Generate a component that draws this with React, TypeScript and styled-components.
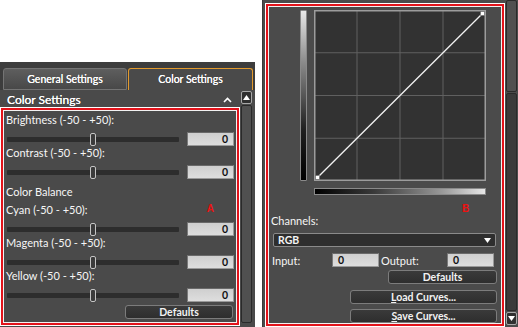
import React from 'react';
import styled, { createGlobalStyle } from 'styled-components';

const Global = createGlobalStyle`
  html, body { margin: 0; padding: 0; background: #ffffff; }
  body {
    width: 518px; height: 327px; overflow: hidden;
    font-family: Lato, "Noto Sans", "Liberation Sans", sans-serif;
    color: #f4f4f4;
  }
`;

const Page = styled.div`
  display: flex;
  align-items: flex-start;
  gap: 7px;
  width: 518px;
  height: 327px;
`;

/* ---------- shared ---------- */

const RedBox = styled.div<{ $w: number; $h: number }>`
  box-sizing: border-box;
  width: ${p => p.$w}px;
  height: ${p => p.$h}px;
  border: 2px solid #e3131b;
  outline: 1px solid #ffffff;
  box-shadow: inset 0 0 0 1px #f2f2f2;
  display: flex;
  flex-direction: column;
`;

const Label = styled.div<{ $mt?: number }>`
  height: 14px;
  line-height: 14px;
  font-size: 11px;
  color: #f6f6f6;
  margin-top: ${p => p.$mt ?? 0}px;
  white-space: nowrap;
`;

const ValueBox = styled.div<{ $align?: 'left' | 'right'; $w?: number }>`
  box-sizing: border-box;
  width: ${p => p.$w ?? 47}px;
  height: 14px;
  line-height: 12px;
  padding: 0 5px;
  font-size: 10.5px;
  font-weight: 700;
  color: #111;
  text-align: ${p => p.$align ?? 'right'};
  background: linear-gradient(#cfcfcf, #dedede);
  border: 1px solid #9a9a9a;
  border-top-color: #6a6a6a;
  border-left-color: #7a7a7a;
`;

const Button = styled.div<{ $w: number; $mt: number }>`
  box-sizing: border-box;
  width: ${p => p.$w}px;
  height: 14px;
  margin-top: ${p => p.$mt}px;
  align-self: flex-end;
  border: 1px solid #7c7c7c;
  border-radius: 3px;
  background: linear-gradient(#3a3a3a, #2e2e2e);
  color: #f2f2f2;
  font-size: 10.5px;
  font-weight: 700;
  line-height: 12px;
  text-align: center;
  white-space: nowrap;
`;

const Marker = styled.span`
  color: #ee1111;
  font-weight: 900;
  font-size: 10px;
  line-height: 10px;
  font-family: "Liberation Sans", Arial, sans-serif;
`;

/* ---------- left panel ---------- */

const LeftPanel = styled.div`
  width: 255px;
  height: 265px;
  margin-top: 62px;
  background: #3d3d3d;
  display: flex;
  flex-direction: column;
`;

const TabBar = styled.div`
  height: 28px;
  display: flex;
  align-items: flex-end;
  gap: 1px;
  padding-left: 3px;
  box-sizing: border-box;
`;

const Tab = styled.div<{ $active?: boolean }>`
  box-sizing: border-box;
  width: ${p => (p.$active ? 125 : 124)}px;
  height: 22px;
  line-height: 20px;
  text-align: center;
  font-size: 10.5px;
  font-weight: 400;
  color: #ffffff;
  text-shadow: 0 0 0.4px #fff;
  border-radius: 3px 3px 0 0;
  border: 1px solid ${p => (p.$active ? '#e39a2c' : '#747474')};
  border-bottom: ${p => (p.$active ? 'none' : '1px solid #747474')};
  background: ${p =>
    p.$active ? '#4a4a4a' : 'linear-gradient(#5e5e5e, #484848)'};
`;

const LeftBody = styled.div`
  flex: 1;
  display: flex;
  background: #4a4a4a;
  padding-top: 1px;
`;

const LeftMain = styled.div`
  width: 241px;
  display: flex;
  flex-direction: column;
`;

const SectionHeader = styled.div`
  height: 17px;
  display: flex;
  align-items: center;
  justify-content: space-between;
  padding: 0 9px 0 7px;
  font-size: 12px;
  font-weight: 400;
  text-shadow: 0 0 0.4px #fff;
  color: #ffffff;
`;

const LeftBox = styled(RedBox)`
  margin-left: 1px;
  padding: 3px 3px 0 3px;
`;

const SliderRow = styled.div<{ $mt?: number }>`
  display: grid;
  grid-template-columns: 1fr 47px;
  column-gap: 8px;
  align-items: center;
  height: 14px;
  margin-top: ${p => p.$mt ?? 5}px;
`;

const Track = styled.div`
  position: relative;
  height: 5px;
  margin-left: 1px;
  background: #2d2d2d;
  border-radius: 1px;
`;

const Thumb = styled.div`
  position: absolute;
  left: 50%;
  top: -4px;
  width: 4px;
  height: 11px;
  margin-left: -3px;
  border: 1px solid #c4c4c4;
  border-radius: 2px;
  background: #3b3b3b;
`;

const MarkerLine = styled.div`
  position: relative;
`;

const FloatMarker = styled.div`
  position: absolute;
  right: 20px;
  top: 2px;
  line-height: 10px;
`;

const VScroll = styled.div`
  width: 11px;
  display: flex;
  flex-direction: column;
  gap: 1px;
  padding-bottom: 4px;
`;

const ScrollBtn = styled.div`
  box-sizing: border-box;
  height: 13px;
  border: 1px solid #a8a8a8;
  border-radius: 2px;
  background: #2f2f2f;
  display: flex;
  align-items: center;
  justify-content: center;
`;

const ScrollTrack = styled.div<{ $light?: boolean }>`
  flex: 1;
  box-sizing: border-box;
  border: 1px solid #2a2a2a;
  border-radius: 2px;
  background: ${p => (p.$light ? '#505050' : '#3a3a3a')};
`;

/* ---------- right panel ---------- */

const RightPanel = styled.div`
  width: 256px;
  height: 327px;
  background: #4b4b4b;
  border-left: 1px solid #3a3a3a;
  box-sizing: border-box;
  display: flex;
  align-items: flex-start;
`;

const RightBox = styled(RedBox)`
  margin: 4px 0 0 3px;
  padding: 4px 0 0 1px;
`;

const CurveArea = styled.div`
  display: flex;
  gap: 7px;
  margin-left: 31px;
`;

const VGradient = styled.div`
  box-sizing: border-box;
  width: 7px;
  height: 171px;
  border: 1px solid #8a8a8a;
  border-radius: 1px;
  background: linear-gradient(#e8e8e8, #8c8c8c 30%, #202020 70%, #000);
`;

const Graph = styled.div`
  width: 172px;
  height: 171px;
`;

const HGradient = styled.div`
  box-sizing: border-box;
  width: 172px;
  height: 7px;
  margin: 7px 0 0 45px;
  border: 1px solid #8a8a8a;
  background: linear-gradient(90deg, #000, #3a3a3a 35%, #9a9a9a 75%, #e6e6e6);
`;

const MarkerRow = styled.div`
  height: 14px;
  line-height: 14px;
  margin: 4px 0 0 193px;
`;

const RightLabel = styled(Label)`
  padding-left: 2px;
  margin-top: 1px;
`;

const Select = styled.div`
  box-sizing: border-box;
  height: 14px;
  margin: 5px 6px 0 4px;
  padding: 0 4px;
  display: flex;
  align-items: center;
  justify-content: space-between;
  border: 1px solid #8a8a8a;
  border-radius: 2px;
  background: #2e2e2e;
  font-size: 10.5px;
  font-weight: 700;
  color: #f4f4f4;
`;

const IORow = styled.div`
  display: flex;
  align-items: center;
  height: 14px;
  margin-top: 6px;
  padding-left: 3px;
`;

const IOLabel = styled.span<{ $w: number }>`
  width: ${p => p.$w}px;
  font-size: 11px;
  color: #f6f6f6;
`;

const RightButtons = styled.div`
  display: flex;
  flex-direction: column;
  padding-right: 5px;
`;

const RightScroll = styled(VScroll)`
  height: 327px;
  margin-left: 2px;
  padding: 0 0 2px 0;
  box-sizing: border-box;
`;

/* ---------- pieces ---------- */

const UpArrow = () => (
  <svg width="7" height="5" viewBox="0 0 7 5">
    <polygon points="0,5 3.5,0 7,5" fill="#fff" />
  </svg>
);

const DownArrow = () => (
  <svg width="7" height="5" viewBox="0 0 7 5">
    <polygon points="0,0 7,0 3.5,5" fill="#fff" />
  </svg>
);

const Chevron = () => (
  <svg width="9" height="6" viewBox="0 0 9 6">
    <polyline points="1,5 4.5,1.5 8,5" fill="none" stroke="#fff" strokeWidth="1.6" />
  </svg>
);

const CurveChart = () => {
  const w = 172;
  const h = 171;
  const lines = [1, 2, 3];
  return (
    <svg width={w} height={h} viewBox={`0 0 ${w} ${h}`}>
      <rect x="0" y="0" width={w} height={h} fill="#323232" />
      {lines.map(i => (
        <line key={'v' + i} x1={(w * i) / 4} y1="0" x2={(w * i) / 4} y2={h} stroke="#606060" strokeWidth="1" />
      ))}
      {lines.map(i => (
        <line key={'h' + i} x1="0" y1={(h * i) / 4} x2={w} y2={(h * i) / 4} stroke="#606060" strokeWidth="1" />
      ))}
      <rect x="0.75" y="0.75" width={w - 1.5} height={h - 1.5} fill="none" stroke="#9c9c9c" strokeWidth="1.5" />
      <line x1="3" y1={h - 3} x2={w - 3} y2="3" stroke="#f2f2f2" strokeWidth="1.3" />
      <rect x="1.5" y={h - 5.5} width="4" height="4" fill="#fff" stroke="#666" strokeWidth="0.6" />
      <rect x={w - 5.5} y="1.5" width="4" height="4" fill="#fff" stroke="#666" strokeWidth="0.6" />
    </svg>
  );
};

const Slider = ({ mt }: { mt?: number }) => (
  <SliderRow $mt={mt}>
    <Track>
      <Thumb />
    </Track>
    <ValueBox>0</ValueBox>
  </SliderRow>
);

export default function App() {
  return (
    <>
      <Global />
      <Page>
        <LeftPanel>
          <TabBar>
            <Tab>General Settings</Tab>
            <Tab $active>Color Settings</Tab>
          </TabBar>
          <LeftBody>
            <LeftMain>
              <SectionHeader>
                <span>Color Settings</span>
                <Chevron />
              </SectionHeader>
              <LeftBox $w={238} $h={217}>
                <Label>Brightness (-50 - +50):</Label>
                <Slider />
                <Label>Contrast (-50 - +50):</Label>
                <Slider />
                <Label $mt={6}>Color Balance</Label>
                <MarkerLine>
                  <FloatMarker>
                    <Marker>A</Marker>
                  </FloatMarker>
                </MarkerLine>
                <Label $mt={4}>Cyan (-50 - +50):</Label>
                <Slider />
                <Label>Magenta (-50 - +50):</Label>
                <Slider />
                <Label>Yellow (-50 - +50):</Label>
                <Slider />
                <Button $w={108} $mt={3} style={{ marginRight: 1 }}>
                  Defaults
                </Button>
              </LeftBox>
            </LeftMain>
            <VScroll>
              <ScrollBtn>
                <UpArrow />
              </ScrollBtn>
              <ScrollTrack $light />
            </VScroll>
          </LeftBody>
        </LeftPanel>

        <RightPanel>
          <RightBox $w={238} $h={322}>
            <CurveArea>
              <VGradient />
              <Graph>
                <CurveChart />
              </Graph>
            </CurveArea>
            <HGradient />
            <MarkerRow>
              <Marker>B</Marker>
            </MarkerRow>
            <RightLabel>Channels:</RightLabel>
            <Select>
              <span>RGB</span>
              <DownArrow />
            </Select>
            <IORow>
              <IOLabel $w={60}>Input:</IOLabel>
              <ValueBox $align="left">0</ValueBox>
              <IOLabel $w={66} style={{ paddingLeft: 2 }}>Output:</IOLabel>
              <ValueBox $align="left">0</ValueBox>
            </IORow>
            <RightButtons>
              <Button $w={109} $mt={3}>Defaults</Button>
              <Button $w={147} $mt={6}>
                <u>L</u>oad Curves...
              </Button>
              <Button $w={147} $mt={5}>
                <u>S</u>ave Curves...
              </Button>
            </RightButtons>
          </RightBox>
          <RightScroll>
            <ScrollTrack $light style={{ flex: '0 0 92px' }} />
            <ScrollTrack />
            <ScrollBtn>
              <DownArrow />
            </ScrollBtn>
          </RightScroll>
        </RightPanel>
      </Page>
    </>
  );
}
